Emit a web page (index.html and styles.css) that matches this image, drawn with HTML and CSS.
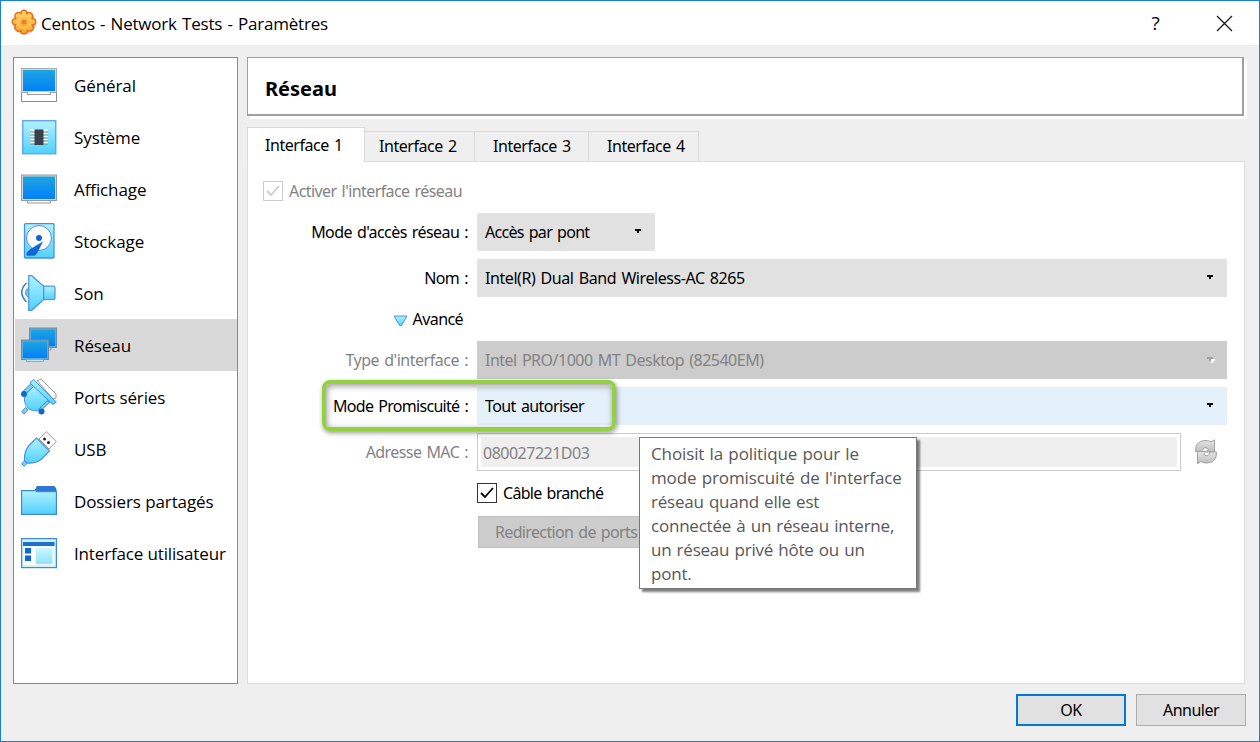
FILE: index.html
```html
<!DOCTYPE html>
<html lang="fr">
<head>
<meta charset="utf-8">
<title>Centos - Network Tests - Paramètres</title>
<link rel="stylesheet" href="styles.css">
</head>
<body>
<svg class="defs" width="0" height="0">
  <defs>
    <linearGradient id="screen" x1="0" y1="0" x2="0" y2="1"><stop offset="0" stop-color="#1fa5e0"/><stop offset="1" stop-color="#0080fa"/></linearGradient>
    <linearGradient id="cyan" x1="0" y1="0" x2="0" y2="1"><stop offset="0" stop-color="#b2f2ff"/><stop offset="1" stop-color="#52d0ff"/></linearGradient>
    <linearGradient id="gold" x1="0" y1="0" x2="0" y2="1"><stop offset="0" stop-color="#ffd36a"/><stop offset="1" stop-color="#ffa025"/></linearGradient>
    <linearGradient id="gray" x1="0" y1="0" x2="0" y2="1"><stop offset="0" stop-color="#e6e6e6"/><stop offset="1" stop-color="#bdbdbd"/></linearGradient>
  </defs>
</svg>
<div class="window">
  <header class="titlebar">
    <svg class="app-icon" width="26" height="26" viewBox="0 0 26 26">
      <circle cx="13.500" cy="14" r="11.500" fill="#8c5a32" opacity=".35"/>
      <path d="M10 4.500Q10 1.200 13 1.200T16 4.500Q18.300 2.300 20.500 4.500T21 9.500Q24.800 9.800 24.800 12.800T21.500 16Q23.500 18.500 21.500 20.800T16.500 21.500Q16 24.800 13 24.800T10 21.500Q7.500 23.300 5.200 21.200T4.500 16Q1.200 15.800 1.200 12.800T4.800 9.500Q2.800 6.500 5 4.500T10 4.500z" fill="url(#gold)" stroke="#dd701d" stroke-width="1.400"/>
      <circle cx="13" cy="13" r="6.500" fill="none" stroke="#ffc85e" stroke-width="1.500"/>
      <circle cx="13" cy="13" r="2" fill="#c98a55" stroke="#ee7d18" stroke-width="1.200"/>
    </svg>
    <h1 class="title">Centos - Network Tests - Paramètres</h1>
    <span class="help">?</span>
    <svg class="close" width="17" height="17" viewBox="0 0 17 17"><path d="M1 1l15 15M16 1L1 16" stroke="#111" stroke-width="1.200"/></svg>
  </header>
  <div class="body">
    <nav class="sidebar">
      <a class="item"><svg class="icon" viewBox="0 0 36 36">
        <path d="M.5 25V34.500H35.500V25" fill="#fff" stroke="#8a8a8a"/><rect x=".5" y="1.500" width="35" height="24" fill="#d0d8dc" stroke="#aaa"/><rect x="2" y="3" width="32" height="21" fill="url(#screen)"/><path d="M6.500 25v2.500h23V25" fill="#fff" stroke="#999"/></svg><span>Général</span></a>
      <a class="item"><svg class="icon" viewBox="0 0 36 36">
        <rect x="1.700" y="1.700" width="33" height="33" fill="url(#cyan)" stroke="#6aa5ea" stroke-width="1.500"/><path d="M9 11.500h5M9 14.500h5M9 17.500h5M9 20.500h5M9 23.500h5M22 11.500h5M22 14.500h5M22 17.500h5M22 20.500h5M22 23.500h5" stroke="#fff" stroke-width="1.800"/><path d="M9 13h5M9 16h5M9 19h5M9 22h5M9 25h5M22 13h5M22 16h5M22 19h5M22 22h5M22 25h5" stroke="#659aa9"/><rect x="13.500" y="10.500" width="9" height="15.500" fill="#3a3f4c"/></svg><span>Système</span></a>
      <a class="item"><svg class="icon" viewBox="0 0 36 36">
        <rect x=".5" y="4" width="35" height="25.500" fill="#d0d8dc" stroke="#999"/><rect x="2" y="5.500" width="32" height="22.500" fill="url(#screen)"/><path d="M6.500 29.500V32h23v-2.500z" fill="#fff" stroke="#999"/></svg><span>Affichage</span></a>
      <a class="item"><svg class="icon" viewBox="0 0 36 36">
        <rect x="3.500" y=".7" width="29.500" height="34.300" rx="1" fill="url(#cyan)" stroke="#4b90dd" stroke-width="1.300"/><circle cx="18" cy="15" r="12.500" fill="#fff" stroke="#4b8fda"/><circle cx="18" cy="15" r="3" fill="#0f66cf"/><path d="M21.500 19L9 26.500Q4.500 30 6 32.500H13.500Q16 31 17 28z" fill="#0f66d4" stroke="#1668cf" stroke-width=".5"/></svg><span>Stockage</span></a>
      <a class="item"><svg class="icon" viewBox="0 0 36 36">
        <path d="M5.500 8Q-4 17 5.500 27" fill="none" stroke="#3c78c4" stroke-width="1.500"/><path d="M8 13Q4.500 14 4.500 17.500T8 23z" fill="#7dccf2" stroke="#4589d4"/><path d="M7.700.7h3l12 10.500v13.300L10.700 35.300h-3z" fill="url(#cyan)" stroke="#4b94dd" stroke-width="1.200"/><path d="M22.700 11.200H32q2 0 2 2v9.500q0 1.800-2 1.800h-9.300z" fill="url(#cyan)" stroke="#4b94dd" stroke-width="1.200"/></svg><span>Son</span></a>
      <a class="item selected"><svg class="icon" viewBox="0 0 36 36">
        <path d="M18 21v2h12v-2" fill="#bcd9ef" stroke="#7e9fb7"/><rect x="8.500" y="1" width="27" height="19.500" fill="#5cadd9" stroke="#768b99"/><rect x="10" y="2.500" width="24" height="16.500" fill="url(#screen)"/><rect x=".5" y="13" width="27" height="19.500" fill="#5cadd9" stroke="#768b99"/><rect x="2" y="14.500" width="24" height="16.500" fill="url(#screen)"/><path d="M5.500 32.500V34.500H22.500V32.500z" fill="#c7e5fa" stroke="#8eaabf"/></svg><span>Réseau</span></a>
      <a class="item"><svg class="icon" viewBox="0 0 36 36">
        <path d="M16 1.500L20.500.5 35 15v4l-3 1z" fill="#fff" stroke="#999"/><path d="M11 5L3.500 13.500V22Q5 32 16 32l13-9z" fill="url(#cyan)" stroke="#4b94dd"/><path d="M10 4.500L2 12.500v3h2L12 8M20 31.500l9-9-2.500-1-8 8z" fill="#79d2f7" stroke="#3f82cc"/><path d="M9 4L12.500.7 35.300 23l-3.300 2.500z" fill="url(#cyan)" stroke="#3f8fda"/><path d="M.8 32.500L4.500 28.500 7 31l-4 4z" fill="#80d5f8" stroke="#438acf"/><circle cx="3" cy="15" r="3" fill="#1167cb"/><circle cx="20.500" cy="32.500" r="3" fill="#1167cb"/></svg><span>Ports séries</span></a>
      <a class="item"><svg class="icon" viewBox="0 0 36 36">
        <path d="M18 8L25.500.8 35.300 10.500 28 18z" fill="#fff" stroke="#999"/><circle cx="23.500" cy="8" r="1.500" fill="#222"/><circle cx="27.500" cy="11.500" r="1.500" fill="#222"/><path d="M15.500 7L28.500 20 20 28.500Q14 33 5.500 32L3.500 30Q3 20 8 14.500z" fill="url(#cyan)" stroke="#4b94dd" stroke-width="1.200"/><path d="M.8 32.500L3.500 30 6 32.500 3 35.300z" fill="#80d5f8" stroke="#438acf"/></svg><span>USB</span></a>
      <a class="item"><svg class="icon" viewBox="0 0 36 36">
        <path d="M13 8l3-5H33.500L35.500 6v5H13z" fill="#2f76d2"/><path d="M.6 7.600H14q1 0 2 1H35.400V31.400H.6z" fill="url(#cyan)" stroke="#3f8bd3" stroke-width="1.200"/></svg><span>Dossiers partagés</span></a>
      <a class="item last"><svg class="icon" viewBox="0 0 36 36">
        <rect x=".6" y="3.600" width="34.800" height="29" fill="#c9f5ff" stroke="#3f8bd3" stroke-width="1.200"/><rect x="2.500" y="11.500" width="31" height="18.500" fill="#fff"/><rect x="2" y="7" width="31.500" height="4" fill="#256dc9"/><rect x="4" y="13" width="6" height="5.500" fill="#1167d2"/><rect x="4" y="20.500" width="6" height="5.500" fill="#1167d2"/><rect x="15" y="13" width="16.500" height="16" fill="url(#cyan)" opacity=".65"/></svg><span>Interface utilisateur</span></a>
    </nav>
    <main class="main">
      <div class="heading"><h2>Réseau</h2></div>
      <div class="tabs">
        <div class="tab active">Interface 1</div>
        <div class="tab second">Interface 2</div>
        <div class="tab third">Interface 3</div>
        <div class="tab fourth">Interface 4</div>
      </div>
      <section class="panel">
        <label class="check enable disabled"><span class="box"><svg width="18" height="18" viewBox="0 0 18 18"><path d="M3 9l4 4 8-9" fill="none" stroke="currentColor" stroke-width="1.800"/></svg></span><span>Activer l'interface réseau</span></label>
        <span class="label">Mode d'accès réseau :</span>
        <div class="combo narrow"><span class="tight">Accès par pont</span><i class="arrow"></i></div>
        <span class="label">Nom :</span>
        <div class="combo"><span class="wide">Intel(R) Dual Band Wireless-AC 8265</span><i class="arrow"></i></div>
        <div class="advanced"><svg width="15" height="12" viewBox="0 0 15 12"><path d="M1 1H14L8.500 10.500h-2z" fill="url(#cyan)" stroke="#4b94e2"/></svg><span>Avancé</span></div>
        <span class="label disabled type">Type d'interface :</span>
        <div class="combo off"><span class="model">Intel PRO/1000 MT Desktop (82540EM)</span><i class="arrow"></i></div>
        <span class="label tight">Mode Promiscuité :</span>
        <div class="combo hot"><span>Tout autoriser</span><i class="arrow"></i></div>
        <span class="label disabled">Adresse MAC :</span>
        <div class="mac-row">
          <div class="field"><span>080027221D03</span></div>
          <svg class="refresh" width="24" height="26" viewBox="0 0 24 26">
            <path d="M1.500 12.500Q1 2 11 1.500q4-.2 6 1.500L20.500.8V13H12l2.500-3Q9 6.500 8.500 12.500z" fill="url(#gray)" stroke="#a3a3a3"/>
            <path d="M22.500 13Q23 23.500 13 24q-4 .2-6-1.500L3.500 24.700V12.500H12L9.500 15.500Q15 19 15.500 13z" fill="url(#gray)" stroke="#a3a3a3"/>
          </svg>
        </div>
        <label class="check cable"><span class="box"><svg width="18" height="18" viewBox="0 0 18 18"><path d="M3 9l4 4 8-9" fill="none" stroke="currentColor" stroke-width="1.800"/></svg></span><span class="tight">Câble branché</span></label>
        <div class="redirect"><span>Redirection de ports</span></div>
      </section>
    </main>
  </div>
  <footer class="footer">
    <button class="btn primary">OK</button>
    <button class="btn">Annuler</button>
  </footer>
  <div class="highlight"></div>
  <div class="tooltip">
    <div class="roomy">Choisit la politique pour le</div>
    <div class="roomy">mode promiscuité de l'interface</div>
    <div>réseau quand elle est</div>
    <div>connectée à un réseau interne,</div>
    <div>un réseau privé hôte ou un</div>
    <div>pont.</div>
  </div>
</div>
</body>
</html>
```
FILE: styles.css
```css
* { box-sizing: border-box; }
body { margin: 0; font: 16px/20px "Noto Sans", sans-serif; letter-spacing: -0.58px; word-spacing: 1.5px; color: #000; white-space: nowrap; }
h1, h2 { margin: 0; font-weight: 400; }
.defs { position: absolute; }
.window { position: relative; width: 1260px; height: 742px; border: 1px solid #1b7fd0; background: #efefef; display: flex; flex-direction: column; overflow: hidden; }

.titlebar { height: 44px; flex: none; background: #fff; display: flex; align-items: center; padding: 0 26px 0 10px; font-family: "Open Sans", sans-serif; }
.app-icon { margin-top: -2px; }
.title { font-size: 17px; letter-spacing: -0.2px; word-spacing: 1px; margin-left: 4px; padding-top: 1px; flex: 1; }
.help { font-size: 19px; margin-right: 57px; margin-top: -1px; }

.body { flex: 1; min-height: 0; display: flex; gap: 9px; padding: 12px 14px 0 12px; }
.sidebar { width: 225px; height: 627px; flex: none; background: #fff; border: 1px solid #828790; padding: 1px 0 0 1px; font: 17px/24px "Open Sans", sans-serif; letter-spacing: -0.1px; word-spacing: 0; }
.item { height: 52px; display: flex; align-items: center; gap: 17px; padding-left: 6px; }
.item span { padding-top: 2px; }
.item.selected { background: #d9d9d9; }
.item.last { letter-spacing: -0.15px; }
.icon { width: 36px; height: 36px; flex: none; }

.main { flex: 1; display: flex; flex-direction: column; height: 627px; }
.heading { height: 59px; flex: none; margin-right: 1px; background: #fff; border: solid #a0a0a0; border-width: 1px 2px 2px 1px; box-shadow: 3px 3px 0 #fff; clip-path: inset(0 -3px -3px 0); display: flex; align-items: center; padding: 5px 0 0 17px; }
.heading h2 { font-size: 20px; font-weight: 700; letter-spacing: 0; }
.tabs { height: 34px; flex: none; margin-top: 11px; display: flex; align-items: flex-end; letter-spacing: -0.45px; }
.tab { height: 30px; border: 1px solid #d9d9d9; border-width: 1px 1px 0 0; padding: 4px 0 0 14px; width: 110px; }
.tab.active { height: 35px; margin-bottom: -1px; width: 118px; background: #fff; border-left-width: 1px; padding: 7px 0 0 17px; z-index: 1; }
.tab.third, .tab.fourth { padding-left: 18px; }
.tab.third { width: 114px; }
.panel { flex: 1; background: #fff; border: 1px solid #dcdcdc; padding: 8px 17px 0 15px; display: grid; grid-template-columns: 206px 1fr; grid-template-rows: 43px 46px 38px 44px 46px 46px 38px 45px 32px; column-gap: 8px; align-items: start; }

.disabled { color: #838383; }
.tight { letter-spacing: -0.7px; }
.wide { letter-spacing: -0.43px; }
.model { letter-spacing: -0.5px; }
.type { letter-spacing: -0.48px; }
.check { display: flex; align-items: center; gap: 6px; }
.box { width: 20px; height: 20px; border: 1px solid #333; display: block; background: #fff; }
.box svg { display: block; }
.enable { grid-column: 1 / 3; height: 42px; }
.enable .box { border-color: #ccc; color: #ccc; }
.label { grid-column: 1; justify-self: end; height: 38px; line-height: 38px; padding-right: 1px; }
.combo { height: 38px; background: #e1e1e1; display: flex; align-items: center; justify-content: space-between; padding: 0 14px 0 8px; }
.narrow { width: 178px; }
.arrow { width: 6px; height: 4px; margin-top: -2px; background: linear-gradient(#000, #000) 0 0 / 6px 2px no-repeat, linear-gradient(#000, #000) 2px 2px / 2px 2px no-repeat; }
.off { background: #ccc; color: #838383; }
.off .arrow { background: linear-gradient(#a0a0a0, #a0a0a0) 0 0 / 6px 2px no-repeat, linear-gradient(#a0a0a0, #a0a0a0) 2px 2px / 2px 2px no-repeat; filter: drop-shadow(2px 2px 0 #fff); }
.hot { background: #e4f0fa; }
.advanced { height: 44px; display: flex; align-items: center; justify-content: flex-end; gap: 5px; padding-right: 6px; grid-column: 1; }
.advanced svg { margin-top: 3px; }
.mac-row { display: flex; align-items: center; gap: 13px; }
.field { width: 704px; height: 38px; border: 1px solid #ccc; padding: 3px; color: #838383; letter-spacing: -0.5px; }
.field span { display: block; height: 30px; background: #efefef; padding: 6px 0 0 2px; }
.refresh { flex: none; }
.cable { grid-column: 2; height: 44px; }
.redirect { grid-column: 2; margin-left: 1px; width: 200px; height: 32px; border: 1px solid #bfbfbf; background: #ccc; color: #838383; line-height: 31px; padding-left: 16px; letter-spacing: -0.65px; }

.footer { height: 57px; flex: none; display: flex; justify-content: flex-end; gap: 10px; padding: 10px 13px 0 0; }
.btn { width: 110px; height: 32px; border: 1px solid #adadad; background: #e1e1e1; font: inherit; letter-spacing: -0.5px; color: #000; padding: 0; }
.primary { border: 2px solid #0078d7; }

.highlight { position: absolute; left: 321px; top: 379px; width: 294px; height: 51px; border: 4px solid #92d23f; border-radius: 8px; box-shadow: 1px 2px 5px rgba(0,0,0,.4), inset 1px 2px 6px rgba(0,0,0,.4); }
.tooltip { position: absolute; left: 638px; top: 436px; width: 278px; height: 152px; background: #fff; border: 1px solid #767676; box-shadow: 3px 3px 2px rgba(0,0,0,.5); padding: 4px 0 0 11px; color: #575757; font: 17px/24px "Open Sans", sans-serif; letter-spacing: -0.22px; word-spacing: 1px; }
.tooltip .roomy { letter-spacing: -0.12px; }
```
